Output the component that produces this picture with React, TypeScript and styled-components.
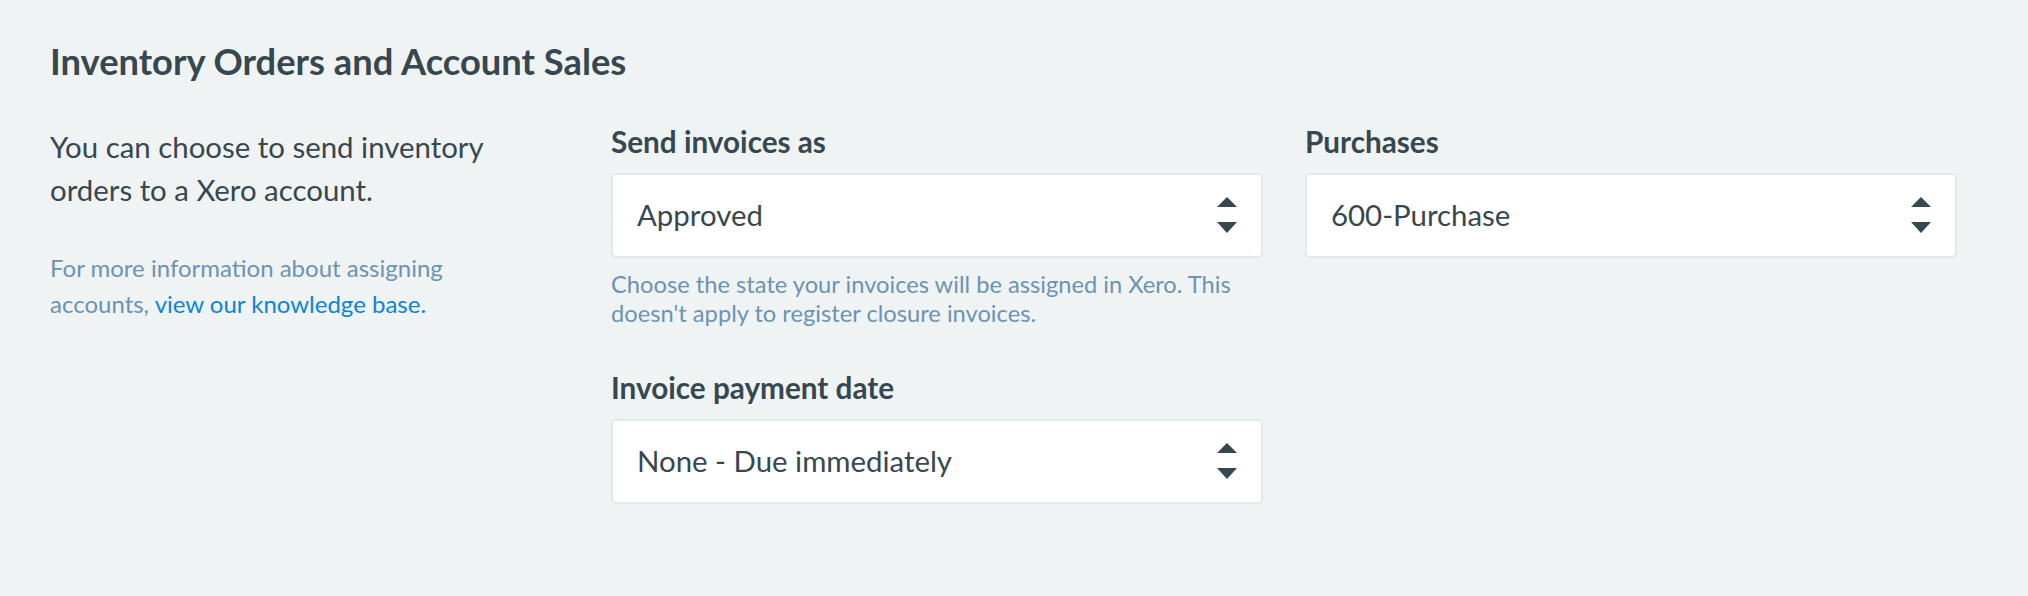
import React from "react";
import styled, { createGlobalStyle } from "styled-components";

const GlobalStyle = createGlobalStyle`
  html, body {
    margin: 0;
    padding: 0;
    background: #f0f3f4;
    min-height: 100%;
  }
  body {
    font-family: Lato, "Open Sans", "Liberation Sans", sans-serif;
    color: #37474f;
  }
`;

const Page = styled.section`
  box-sizing: border-box;
  width: 2028px;
  min-height: 596px;
  padding: 40px 0 0 50px;
  background: #f0f3f4;
`;

const Title = styled.h2`
  margin: 0 0 42px;
  font-size: 36.3px;
  line-height: 43.2px;
  font-weight: 700;
  color: #37474f;
`;

const Grid = styled.div`
  display: grid;
  grid-template-columns: 519px 652px 652px;
  column-gap: 42px;
  align-items: start;
`;

const Intro = styled.div`
  max-width: 470px;
`;

const Lead = styled.p`
  margin: 0 0 38px;
  font-size: 29.4px;
  line-height: 43.2px;
  color: #37474f;
`;

const Note = styled.p`
  margin: 0;
  font-size: 24px;
  line-height: 36px;
  color: #6b93b3;
`;

const Link = styled.a`
  color: #0b84dc;
  text-decoration: none;
`;

const FieldStack = styled.div`
  display: flex;
  flex-direction: column;
  gap: 44px;
`;

const Field = styled.div`
  display: flex;
  flex-direction: column;
`;

const Label = styled.label`
  font-size: 29.7px;
  line-height: 34.6px;
  font-weight: 700;
  color: #37474f;
  margin-bottom: 13px;
`;

const SelectBox = styled.div`
  box-sizing: border-box;
  height: 85px;
  display: flex;
  align-items: center;
  justify-content: space-between;
  padding: 0 24px 0 24px;
  background: #ffffff;
  border: 2px solid #e3e8ea;
  border-radius: 5px;
`;

const SelectValue = styled.span`
  font-size: 29.4px;
  line-height: 34.6px;
  color: #37474f;
`;

const Help = styled.p`
  margin: 12px 0 0;
  font-size: 23.7px;
  line-height: 28.8px;
  color: #6b93b3;
`;

const Arrows = () => (
  <svg width="20" height="36" viewBox="0 0 20 36" aria-hidden="true">
    <polygon points="10,0 20,10 0,10" fill="#37474f" />
    <polygon points="0,25 20,25 10,36" fill="#37474f" />
  </svg>
);

const Select = ({ value }: { value: string }) => (
  <SelectBox>
    <SelectValue>{value}</SelectValue>
    <Arrows />
  </SelectBox>
);

export default function App() {
  return (
    <>
      <GlobalStyle />
      <Page>
        <Title>Inventory Orders and Account Sales</Title>
        <Grid>
          <Intro>
            <Lead>You can choose to send inventory orders to a Xero account.</Lead>
            <Note>
              For more information about assigning accounts, <Link href="#">view our knowledge base.</Link>
            </Note>
          </Intro>
          <FieldStack>
            <Field>
              <Label>Send invoices as</Label>
              <Select value="Approved" />
              <Help>
                Choose the state your invoices will be assigned in Xero. This doesn't apply to
                register closure invoices.
              </Help>
            </Field>
            <Field>
              <Label>Invoice payment date</Label>
              <Select value="None - Due immediately" />
            </Field>
          </FieldStack>
          <FieldStack>
            <Field>
              <Label>Purchases</Label>
              <Select value="600-Purchase" />
            </Field>
          </FieldStack>
        </Grid>
      </Page>
    </>
  );
}
